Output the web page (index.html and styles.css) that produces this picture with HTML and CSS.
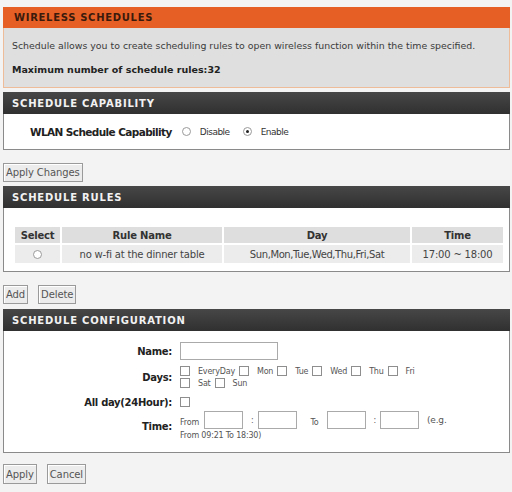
FILE: index.html
```html
<!DOCTYPE html>
<html>
<head>
<meta charset="utf-8">
<title>Wireless Schedules</title>
<link rel="stylesheet" href="styles.css">
</head>
<body>
<div class="page">
  <div class="box box-intro">
    <h2 class="bar bar-orange">WIRELESS SCHEDULES</h2>
    <div class="intro">
      <p>Schedule allows you to create scheduling rules to open wireless function within the time specified.</p>
      <p class="strong">Maximum number of schedule rules:32</p>
    </div>
  </div>

  <div class="box">
    <h2 class="bar">SCHEDULE CAPABILITY</h2>
    <div class="panel cap">
      <span class="cap-label">WLAN Schedule Capability</span>
      <span class="radio"></span><span class="opt opt-first">Disable</span>
      <span class="radio on"></span><span class="opt">Enable</span>
    </div>
  </div>

  <div class="actions actions-1"><button class="btn">Apply Changes</button></div>

  <div class="box">
    <h2 class="bar">SCHEDULE RULES</h2>
    <div class="panel rules">
      <table class="rules-table">
        <thead>
          <tr><th class="c-sel">Select</th><th class="c-name">Rule Name</th><th class="c-day">Day</th><th>Time</th></tr>
        </thead>
        <tbody>
          <tr><td><span class="radio"></span></td><td>no w-fi at the dinner table</td><td class="day-list">Sun,Mon,Tue,Wed,Thu,Fri,Sat</td><td>17:00 ~ 18:00</td></tr>
        </tbody>
      </table>
    </div>
  </div>

  <div class="actions actions-2"><button class="btn">Add</button><button class="btn">Delete</button></div>

  <div class="box">
    <h2 class="bar">SCHEDULE CONFIGURATION</h2>
    <div class="panel config">
      <div class="row row-name">
        <label class="lbl">Name:</label>
        <div class="val"><input class="txt txt-name" type="text"></div>
      </div>
      <div class="row row-days">
        <label class="lbl">Days:</label>
        <div class="val days">
          <div class="day-line"><span class="chk"></span><span class="day">EveryDay</span><span class="chk"></span><span class="day">Mon</span><span class="chk"></span><span class="day">Tue</span><span class="chk"></span><span class="day">Wed</span><span class="chk"></span><span class="day">Thu</span><span class="chk"></span><span class="day">Fri</span></div>
          <div class="day-line"><span class="chk"></span><span class="day">Sat</span><span class="chk"></span><span class="day">Sun</span></div>
        </div>
      </div>
      <div class="row row-allday">
        <label class="lbl">All day(24Hour):</label>
        <div class="val"><span class="chk"></span></div>
      </div>
      <div class="row row-time">
        <label class="lbl">Time:</label>
        <div class="val time">
          <div class="time-line"><span class="small from">From</span><input class="txt txt-t" type="text"><span class="colon">:</span><input class="txt txt-t" type="text"><span class="small to">To</span><input class="txt txt-t" type="text"><span class="colon">:</span><input class="txt txt-t" type="text"><span class="eg">(e.g.</span></div>
          <div class="time-hint">From 09:21 To 18:30)</div>
        </div>
      </div>
    </div>
  </div>

  <div class="actions actions-3"><button class="btn">Apply</button><button class="btn">Cancel</button></div>
</div>
</body>
</html>
```
FILE: styles.css
```css
html, body {
  margin: 0;
  padding: 0;
  background: #f3f3f3;
}

body {
  font-family: "DejaVu Sans", "Liberation Sans", sans-serif;
  font-size: 10px;
  color: #333;
}

.page {
  width: 507px;
  padding: 7px 0 0 3px;
}

h2, p { margin: 0; }

/* section title bars */
.bar {
  height: 22px;
  line-height: 23px;
  padding-left: 9px;
  background: linear-gradient(#474747, #303030);
  color: #f2f2f2;
  font-family: "DejaVu Sans", sans-serif;
  font-weight: bold;
  font-size: 10px;
  letter-spacing: 0.8px;
}

.bar-orange {
  height: 21px;
  line-height: 22px;
  padding-left: 11px;
  background: #e65f25;
  color: #3b1a0c;
  letter-spacing: 0.7px;
}

.box-intro {
  margin-bottom: 4px;
}

.intro {
  background: #dfdfdf;
  border: 1px solid #efbc9a;
  border-top: none;
  height: 59px;
  padding: 0 8px;
  font-size: 9.4px;
  color: #3a3a3a;
}

.intro p {
  padding-top: 12px;
  line-height: 12px;
}

.intro p.strong {
  font-weight: bold;
  font-size: 9.5px;
  padding-top: 12px;
  color: #222;
}

.panel {
  background: #fff;
  border: 1px solid #8a8a8a;
  border-top: none;
}

/* capability row */
.cap {
  height: 35px;
  display: flex;
  align-items: center;
  padding-left: 26px;
}

.cap-label {
  font-weight: bold;
  font-size: 10.5px;
  color: #222;
  letter-spacing: -0.6px;
  margin-right: 10px;
}

.opt {
  font-size: 9px;
  letter-spacing: -0.5px;
  margin-left: 9px;
}

.opt-first { margin-right: 13px; }

.radio {
  display: inline-block;
  width: 9px;
  height: 9px;
  border: 1px solid #9a9a9a;
  border-radius: 50%;
  background: #fff;
  box-sizing: border-box;
  position: relative;
  vertical-align: middle;
}

.radio.on::after {
  content: "";
  position: absolute;
  left: 2px;
  top: 2px;
  width: 3px;
  height: 3px;
  border-radius: 50%;
  background: #222;
}

/* button rows */
.actions {
  display: flex;
  gap: 10px;
  align-items: flex-start;
}

.actions-1 { padding: 13px 0 4px; }
.actions-2 { padding: 13px 0 5px; }
.actions-3 { padding: 11px 0 0; }

.actions-3 .btn { height: 20px; }

.btn {
  font-family: "DejaVu Sans", sans-serif;
  font-size: 10px;
  letter-spacing: -0.1px;
  color: #555;
  height: 19px;
  padding: 0 2px;
  margin: 0;
  background: #ececec;
  border: 1px solid #9a9a9a;
  box-shadow: inset 1px 1px 0 #fff;
}

/* rules table */
.rules {
  height: 64px;
  padding: 17px 0 0 9px;
  box-sizing: border-box;
}

.rules-table {
  width: 492px;
  border-collapse: separate;
  border-spacing: 2px;
  background: #fff;
  font-size: 10px;
  letter-spacing: -0.2px;
  table-layout: fixed;
}

.rules-table th {
  background: #dedede;
  height: 16px;
  padding: 0;
  font-weight: bold;
  color: #333;
}

.rules-table td {
  background: #ececec;
  height: 18px;
  padding: 0;
  text-align: center;
  color: #444;
}

.rules-table td.day-list { letter-spacing: -0.4px; }

.c-sel { width: 45px; }
.c-name { width: 160px; }
.c-day { width: 186px; }

/* configuration form */
.config {
  height: 122px;
  box-sizing: border-box;
  padding-top: 11px;
}

.row {
  display: flex;
  align-items: center;
}

.lbl {
  width: 176px;
  flex: none;
  text-align: right;
  font-weight: bold;
  font-size: 10px;
  color: #222;
  letter-spacing: -0.3px;
  padding-right: 8px;
  box-sizing: border-box;
}

.val {
  font-size: 8px;
  letter-spacing: -0.2px;
  color: #555;
}

.txt {
  box-sizing: border-box;
  height: 18px;
  border: 1px solid #aaa;
  background: #fff;
  margin: 0;
  padding: 0;
}

.txt-name { width: 98px; display: block; }
.txt-t { width: 39px; }

.row-days {
  margin-top: 5px;
}

.day-line {
  display: flex;
  align-items: center;
  height: 12px;
}

.chk {
  display: inline-block;
  width: 10px;
  height: 10px;
  border: 1px solid #8e8e8e;
  box-sizing: border-box;
  background: #fff;
  flex: none;
}

.row-allday .chk { display: block; }

.day { margin: 0 4px 0 8px; }

.row-allday {
  margin-top: 5px;
  height: 16px;
}

.row-time {
  margin-top: 1px;
}

.time-line {
  display: flex;
  align-items: center;
  height: 18px;
}

.time-line .small { align-self: flex-end; line-height: 12px; }

.from { margin-right: 5px; }

.colon { margin: 0 4px 0 8px; }

.to { margin: 0 8px 0 14px; }

.eg { margin-left: 8px; font-size: 9px; }

.time-hint {
  line-height: 12px;
  margin-top: 1px;
}
```
